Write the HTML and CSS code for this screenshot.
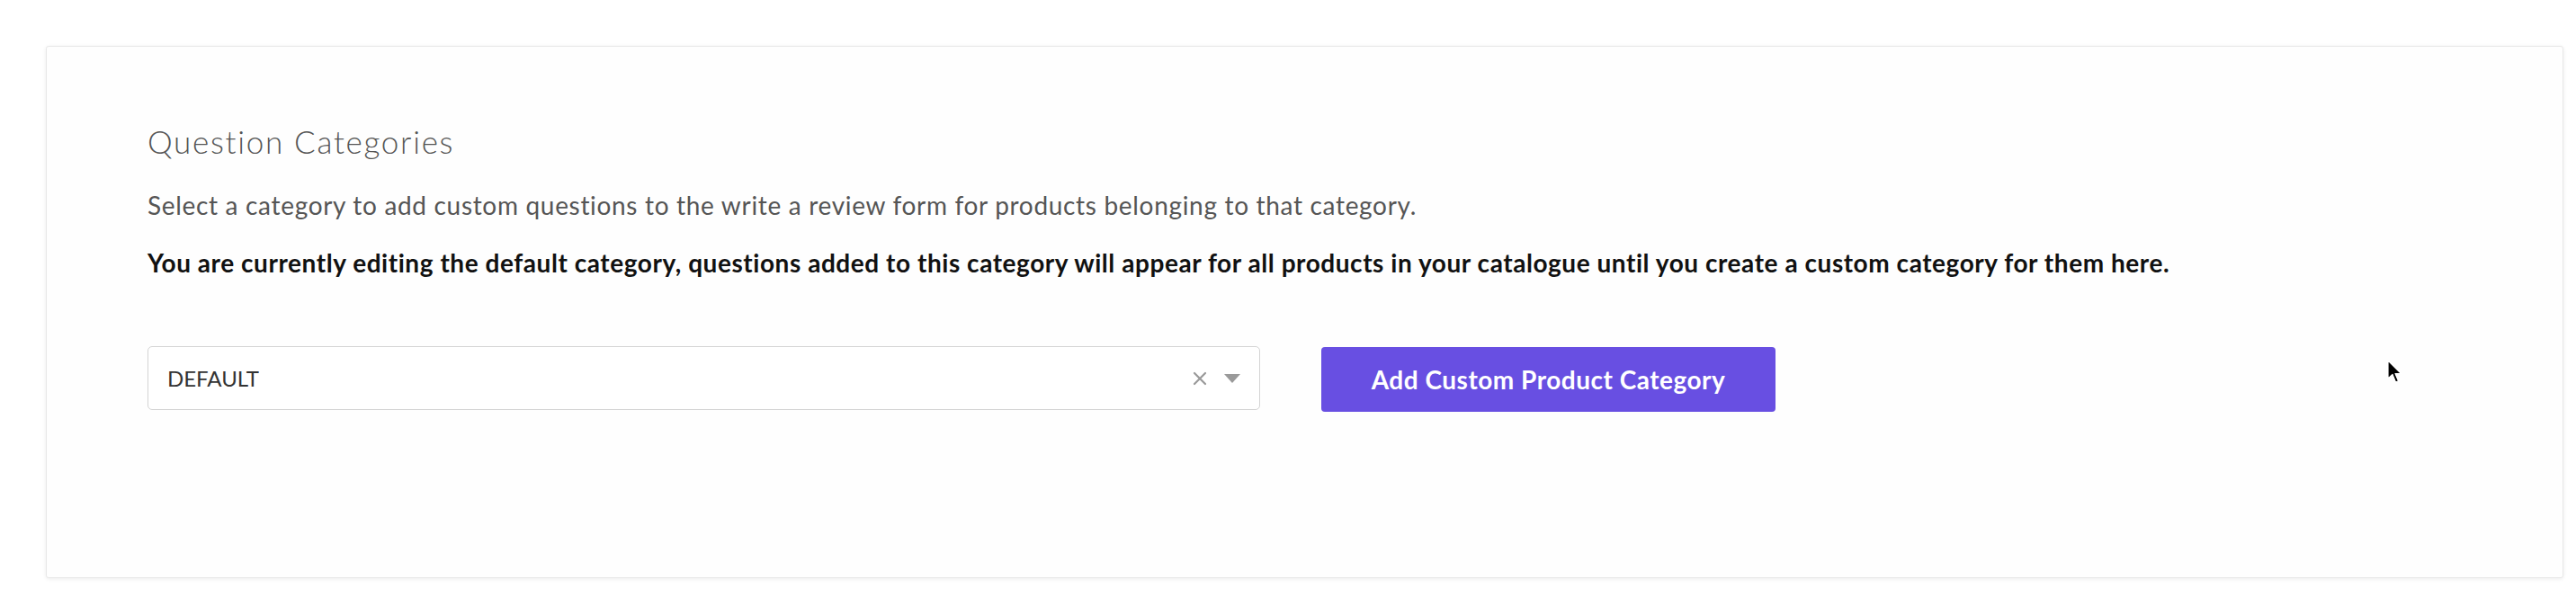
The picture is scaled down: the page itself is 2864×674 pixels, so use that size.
FILE: index.html
```html
<!DOCTYPE html>
<html lang="en">
<head>
<meta charset="utf-8">
<title>Question Categories</title>
<link rel="stylesheet" href="styles.css">
</head>
<body>
<div class="card">
  <h2 class="title">Question Categories</h2>
  <p class="desc">Select a category to add custom questions to the write a review form for products belonging to that category.</p>
  <p class="note">You are currently editing the default category, questions added to this category will appear for all products in your catalogue until you create a custom category for them here.</p>
  <div class="row">
    <div class="select">
      <span class="select-value">DEFAULT</span>
      <span class="select-icons">
        <svg class="clear" width="16" height="16" viewBox="0 0 16 16"><path d="M2 2 L14 14 M14 2 L2 14" stroke="#9a9a9a" stroke-width="2.2" stroke-linecap="round"/></svg>
        <svg class="caret" width="20" height="10" viewBox="0 0 20 10"><path d="M1 0 H19 L10 10 Z" fill="#9a9a9a"/></svg>
      </span>
    </div>
    <button class="btn">Add Custom Product Category</button>
  </div>
</div>
<svg class="cursor" width="18" height="28" viewBox="0 0 18 28"><path d="M1 1 L1 21 L6 16.5 L9.5 25 L12.5 23.8 L9 15.5 L15.5 15.5 Z" fill="#000" stroke="#fff" stroke-width="1.2" stroke-linejoin="round"/></svg>
</body>
</html>
```
FILE: styles.css
```css
html, body {
  margin: 0;
  padding: 0;
  background: #ffffff;
}
body {
  position: relative;
  width: 2864px;
  height: 674px;
  font-family: "Lato", "Noto Sans", sans-serif;
  overflow: hidden;
}
.card {
  box-sizing: border-box;
  margin: 51px 14px 0 51px;
  height: 592px;
  background: #fefefe;
  border: 1px solid #e8e8e8;
  border-radius: 3px;
  box-shadow: 0 1px 4px rgba(0, 0, 0, 0.08);
  padding: 85px 0 0 112px;
}
.title {
  margin: 0;
  font-size: 35px;
  line-height: 40px;
  font-weight: 300;
  letter-spacing: 1.7px;
  color: #555555;
}
.desc {
  margin: 33px 0 0;
  font-size: 28px;
  line-height: 36px;
  font-weight: 400;
  letter-spacing: 0.68px;
  color: #555555;
}
.note {
  margin: 28px 0 0;
  font-size: 28px;
  line-height: 36px;
  font-weight: 700;
  letter-spacing: 0.55px;
  color: #111111;
}
.row {
  display: flex;
  align-items: flex-start;
  gap: 68px;
  margin-top: 75px;
}
.select {
  box-sizing: border-box;
  width: 1237px;
  height: 71px;
  display: flex;
  align-items: center;
  justify-content: space-between;
  padding: 0 20px 0 21px;
  background: #ffffff;
  border: 1.5px solid #d4d4d4;
  border-radius: 5px;
}
.select-value {
  font-size: 24px;
  color: #333333;
}
.select-icons {
  display: flex;
  align-items: center;
  gap: 18px;
}
.btn {
  box-sizing: border-box;
  width: 505px;
  height: 72px;
  margin-top: 1px;
  border: none;
  border-radius: 4px;
  background: #684fe2;
  color: #ffffff;
  font-family: "Lato", "Noto Sans", sans-serif;
  font-size: 28px;
  font-weight: 700;
  letter-spacing: 0.5px;
}
.cursor {
  position: absolute;
  left: 2654px;
  top: 400px;
}
```
